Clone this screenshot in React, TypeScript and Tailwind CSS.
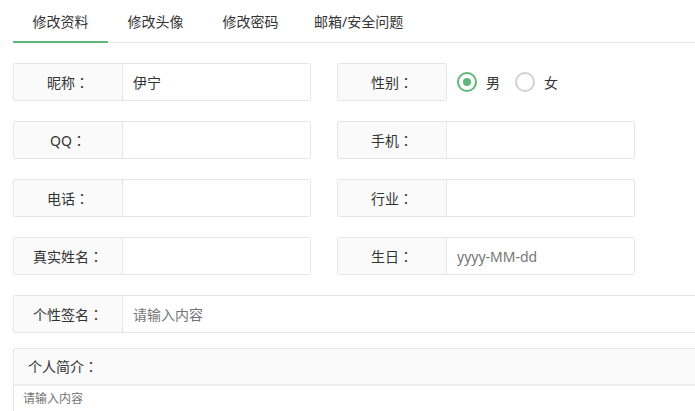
import React from "react";

const TABS = ["修改资料", "修改头像", "修改密码", "邮箱/安全问题"];

// full-width colon, centred in its cell like the reference font
function Label({ text }: { text: string }) {
  return (
    <>
      {text}
      <span className="font-['Noto_Sans_CJK_TC',sans-serif]">：</span>
    </>
  );
}

function Field({
  label,
  value,
  placeholder,
}: {
  label: string;
  value?: string;
  placeholder?: string;
}) {
  return (
    <div className="flex w-[298px] h-[38px] border border-[#e6e6e6] rounded-[2px]">
      <div className="w-[109px] shrink-0 bg-[#fafafa] border-r border-[#e6e6e6] flex items-center justify-center text-[14px] text-[#333]">
        <Label text={label} />
      </div>
      <input
        className="flex-1 min-w-0 pl-[10px] text-[14px] text-[#333] outline-none placeholder:text-[#757575]"
        defaultValue={value}
        placeholder={placeholder}
      />
    </div>
  );
}

function Radio({ label, checked }: { label: string; checked?: boolean }) {
  return (
    <div className="flex items-center">
      <span
        className={
          checked
            ? "w-5 h-5 rounded-full border-2 border-[#5FB878] flex items-center justify-center"
            : "w-5 h-5 rounded-full border-2 border-[#d2d2d2]"
        }
      >
        {checked && <span className="w-2 h-2 rounded-full bg-[#5FB878]" />}
      </span>
      <span className="ml-[9px] text-[14px] text-[#333]">{label}</span>
    </div>
  );
}

export default function App() {
  return (
    <div className="w-[695px] h-[411px] overflow-hidden bg-white font-['Noto_Sans','Noto_Sans_CJK_SC',sans-serif]">
      <ul className="ml-[13px] flex h-[43px] border-b border-[#e6e6e6]">
        {TABS.map((t, i) => (
          <li
            key={t}
            className={
              i === 3
                ? "relative h-[42px] flex items-center pl-[16px] text-[14px] text-[#333]"
                : "relative w-[95px] h-[42px] flex items-center justify-center text-[14px] text-[#333]"
            }
          >
            {t}
            {i === 0 && (
              <span className="absolute left-0 right-0 -bottom-px h-[2px] bg-[#5FB878]" />
            )}
          </li>
        ))}
      </ul>

      <div className="px-[13px] pt-[20px] flex flex-col gap-[20px]">
        <div className="flex gap-[26px]">
          <Field label="昵称" value="伊宁" />
          <div className="flex w-[298px] h-[38px]">
            <div className="w-[110px] shrink-0 bg-[#fafafa] border border-[#e6e6e6] rounded-[2px] flex items-center justify-center text-[14px] text-[#333]">
              <Label text="性别" />
            </div>
            <div className="flex items-center gap-[15px] pl-[10px]">
              <Radio label="男" checked />
              <Radio label="女" />
            </div>
          </div>
        </div>
        <div className="flex gap-[26px]">
          <Field label="QQ" />
          <Field label="手机" />
        </div>
        <div className="flex gap-[26px]">
          <Field label="电话" />
          <Field label="行业" />
        </div>
        <div className="flex gap-[26px]">
          <Field label="真实姓名" />
          <Field label="生日" placeholder="yyyy-MM-dd" />
        </div>
        <div className="flex w-[720px] h-[38px] border border-[#e6e6e6] rounded-[2px]">
          <div className="w-[109px] shrink-0 bg-[#fafafa] border-r border-[#e6e6e6] flex items-center justify-center text-[14px] text-[#333]">
            <Label text="个性签名" />
          </div>
          <input
            className="flex-1 min-w-0 pl-[10px] text-[14px] text-[#333] outline-none placeholder:text-[#757575]"
            placeholder="请输入内容"
          />
        </div>
      </div>

      <div className="mx-[13px] mt-[15px] w-[720px] border border-[#e6e6e6] rounded-[2px]">
        <div className="h-[37px] bg-[#fafafa] border-b-2 border-[#eee] flex items-center pl-[14px] text-[14px] text-[#333]">
          <Label text="个人简介" />
        </div>
        <textarea
          className="block w-full h-[100px] pl-[9px] pt-[4px] text-[12px] text-[#333] outline-none resize-none placeholder:text-[#757575]"
          placeholder="请输入内容"
        />
      </div>
    </div>
  );
}
